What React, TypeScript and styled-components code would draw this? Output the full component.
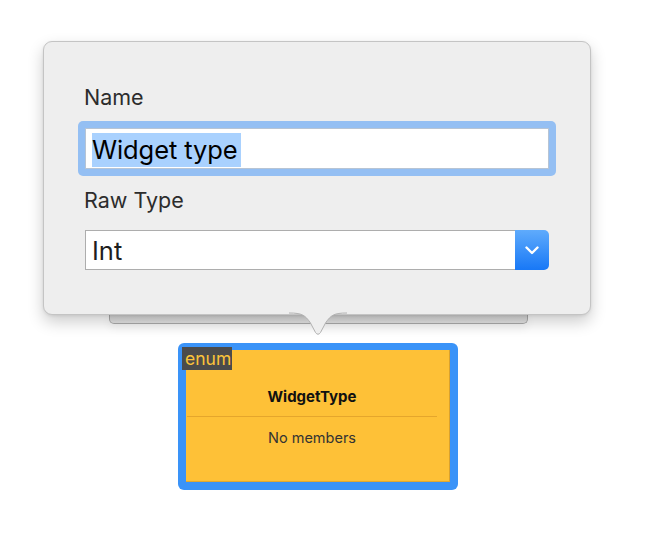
import React from "react";
import styled, { createGlobalStyle } from "styled-components";

const Global = createGlobalStyle`
  html, body { margin: 0; padding: 0; background: #ffffff; }
  body { font-family: Inter, "Noto Sans", "Liberation Sans", sans-serif; -webkit-font-smoothing: antialiased; }
  * { box-sizing: border-box; }
`;

const Stage = styled.div`
  width: 650px;
  height: 552px;
  padding: 41px 0 0 43px;
  display: flex;
  flex-direction: column;
  align-items: flex-start;
  overflow: hidden;
`;

const Popover = styled.div`
  position: relative;
  z-index: 2;
  width: 548px;
  height: 274px;
  padding: 42px 41px 0 41px;
  background: #eeeeee;
  border: 1px solid #c4c4c4;
  border-radius: 9px;
  box-shadow: 0 7px 16px rgba(0, 0, 0, 0.2), 0 1px 3px rgba(0, 0, 0, 0.08);
  display: flex;
  flex-direction: column;
`;

const Arrow = styled.svg`
  position: absolute;
  left: 50%;
  top: 100%;
  margin-top: -2px;
  transform: translateX(-50%);
  margin-left: 1px;
  overflow: visible;
`;

const Label = styled.div<{ $gap: number }>`
  font-size: 21.5px;
  line-height: 26px;
  color: #2c2c2c;
  margin-left: -1px;
  margin-bottom: ${(p) => p.$gap}px;
`;

const FocusRing = styled.div`
  margin: 0 -7px 11px -7px;
  padding: 7px;
  background: #94bff3;
  border-radius: 5px;
`;

const TextField = styled.div`
  height: 41px;
  background: #ffffff;
  border: 1px solid #b7c4d4;
  padding: 2px 6px 0 6px;
  display: flex;
  align-items: center;
`;

const Selected = styled.span`
  display: inline-block;
  background: #a9d1fe;
  color: #000000;
  font-size: 25.5px;
  line-height: 34px;
  height: 34px;
  padding: 0 3px 0 0;
  letter-spacing: -0.1px;
`;

const Select = styled.div`
  height: 40px;
  display: flex;
  align-items: stretch;
`;

const SelectValue = styled.div`
  flex: 1;
  background: #ffffff;
  border: 1px solid #adadad;
  border-right: none;
  padding: 1px 6px 0 6px;
  display: flex;
  align-items: center;
  font-size: 25.5px;
  color: #1e1e1e;
`;

const SelectButton = styled.div`
  width: 34px;
  border-radius: 0 5px 5px 0;
  background: linear-gradient(#5fabfc, #1878f6);
  display: flex;
  align-items: center;
  justify-content: center;
`;

const Underlay = styled.div`
  width: 419px;
  height: 10px;
  margin: -1px 0 0 66px;
  background: linear-gradient(#d6d6d6, #e4e4e4);
  border: 1px solid #ababab;
  border-top: none;
  border-radius: 0 0 5px 5px;
  box-shadow: 0 4px 10px rgba(0, 0, 0, 0.06);
`;

const Node = styled.div`
  position: relative;
  margin: 19px 0 0 135px;
  width: 280px;
  height: 147px;
  padding: 7px 8px 8px 8px;
  background: #3a93f8;
  border-radius: 6px;
`;

const NodeBody = styled.div`
  height: 100%;
  background: #fec137;
  border-right: 1px solid #d9a12e;
  border-bottom: 1px solid #e0a832;
  padding: 38px 12px 0 1px;
  display: flex;
  flex-direction: column;
  align-items: stretch;
`;

const Tag = styled.div`
  position: absolute;
  left: 4px;
  top: 4px;
  width: 50px;
  height: 23px;
  background: #4b4b4b;
  color: #fcc43a;
  font-size: 17.5px;
  line-height: 23px;
  padding-left: 3px;
`;

const NodeTitle = styled.div`
  text-align: center;
  font-size: 15px;
  line-height: 17px;
  font-weight: 700;
  color: #111111;
  padding-bottom: 11px;
  border-bottom: 1px solid #e5a62c;
`;

const NodeMembers = styled.div`
  text-align: center;
  font-size: 14.5px;
  line-height: 17px;
  color: #333333;
  margin-top: 12px;
`;

const arrowPath =
  "M0,1 C13,1 16,3 21.5,11 L26.5,20.5 Q29,24 31.5,20.5 L36.5,11 C42,3 45,1 58,1";

export default function App() {
  return (
    <>
      <Global />
      <Stage>
        <Popover>
          <Label $gap={11}>Name</Label>
          <FocusRing>
            <TextField>
              <Selected>Widget type</Selected>
            </TextField>
          </FocusRing>
          <Label $gap={17}>Raw Type</Label>
          <Select>
            <SelectValue>Int</SelectValue>
            <SelectButton>
              <svg width="14" height="9" viewBox="0 0 14 9">
                <polyline
                  points="1.5,1.5 7,7 12.5,1.5"
                  fill="none"
                  stroke="#ffffff"
                  strokeWidth="2.4"
                  strokeLinecap="round"
                  strokeLinejoin="round"
                />
              </svg>
            </SelectButton>
          </Select>
          <Arrow width="58" height="25" viewBox="0 0 58 25">
            <path d={arrowPath + " L58,0 L0,0 Z"} fill="#eeeeee" stroke="none" />
            <path d={arrowPath} fill="none" stroke="#b2b2b2" strokeWidth="1" />
          </Arrow>
        </Popover>
        <Underlay />
        <Node>
          <NodeBody>
            <NodeTitle>WidgetType</NodeTitle>
            <NodeMembers>No members</NodeMembers>
          </NodeBody>
          <Tag>enum</Tag>
        </Node>
      </Stage>
    </>
  );
}
